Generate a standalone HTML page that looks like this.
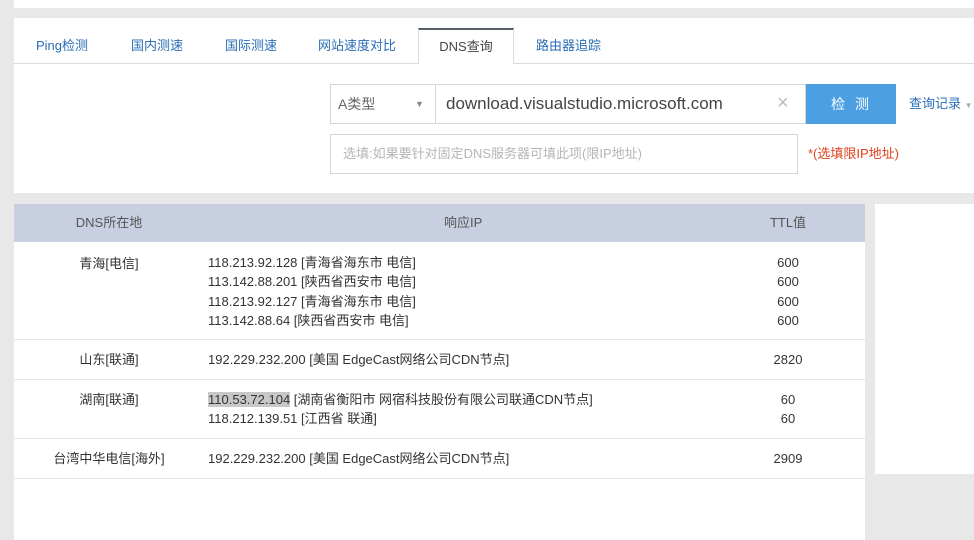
<!DOCTYPE html>
<html><head><meta charset="utf-8"><style>
*{margin:0;padding:0;box-sizing:border-box}
body{width:974px;height:540px;background:#e8e8e8;position:relative;overflow:hidden;font-family:"Liberation Sans","Noto Sans CJK SC",sans-serif;font-size:13px;color:#333}
.a{position:absolute}
.tab{position:absolute;top:28px;height:36px;line-height:36px;font-size:13px;color:#2a6db5}
td{padding:0}
.row{position:absolute;left:14px;width:851px;border-bottom:1px solid #e6e6e6}
.c1{position:absolute;left:0;width:190px;text-align:center}
.c2{position:absolute;left:194px}
.c3{position:absolute;left:740px;width:68px;text-align:center}
.ln{height:19.3px;line-height:19.3px}
</style></head><body>
<div class="a" style="left:14px;top:0;width:960px;height:8px;background:#fff"></div>
<div class="a" style="left:14px;top:18px;width:960px;height:175px;background:#fff"></div>
<div class="a" style="left:14px;top:63px;width:960px;height:1px;background:#ddd"></div>
<div class="tab" style="left:36px">Ping检测</div>
<div class="tab" style="left:131px">国内测速</div>
<div class="tab" style="left:225px">国际测速</div>
<div class="tab" style="left:318px">网站速度对比</div>
<div class="a" style="left:418px;top:28px;width:96px;height:36px;background:#fff;border:1px solid #ddd;border-top:2px solid #555d66;border-bottom:none;text-align:center;line-height:34px;color:#444">DNS查询</div>
<div class="tab" style="left:536px">路由器追踪</div>
<div class="a" style="left:330px;top:84px;width:476px;height:40px;border:1px solid #d6d6d6;background:#fff"></div>
<div class="a" style="left:435px;top:84px;width:1px;height:40px;background:#d6d6d6"></div>
<div class="a" style="left:338px;top:84px;line-height:40px;font-size:14px;color:#666">A类型</div>
<div class="a" style="left:415px;top:84px;line-height:40px;font-size:9px;color:#888">▼</div>
<div class="a" style="left:446px;top:84px;line-height:40px;font-size:17px;color:#444">download.visualstudio.microsoft.com</div>
<div class="a" style="left:777px;top:84px;line-height:38px;font-size:20px;color:#bbb">×</div>
<div class="a" style="left:806px;top:84px;width:90px;height:40px;background:#4c9fe0;color:#fff;text-align:center;line-height:40px;font-size:14px;letter-spacing:10px;padding-left:8px">检测</div>
<div class="a" style="left:909px;top:84px;line-height:40px;font-size:13px;color:#2a6db5">查询记录 <span style="font-size:8px;color:#aaa">▼</span></div>
<div class="a" style="left:330px;top:134px;width:468px;height:40px;border:1px solid #d6d6d6;padding-left:12px;line-height:38px;color:#b5b5b5;font-size:13px">选填:如果要针对固定DNS服务器可填此项(限IP地址)</div>
<div class="a" style="left:808px;top:134px;line-height:40px;color:#e0401c;font-size:13px">*(选填限IP地址)</div>
<div class="a" style="left:14px;top:204px;width:851px;height:336px;background:#fff"></div>
<div class="a" style="left:875px;top:204px;width:99px;height:270px;background:#fff"></div>
<div class="a" style="left:14px;top:204px;width:851px;height:38px;background:#c8cfe0;color:#555;line-height:38px">
<span class="c1" style="left:0">DNS所在地</span><span style="position:absolute;left:430px">响应IP</span><span class="c3">TTL值</span></div>
<div class="row" style="top:242px;height:98px;padding-top:11px">
<div class="c1" style="top:11px" class="ln">青海[电信]</div>
<div class="c2" style="top:11px"><div class="ln">118.213.92.128 [青海省海东市 电信]</div><div class="ln">113.142.88.201 [陕西省西安市 电信]</div><div class="ln">118.213.92.127 [青海省海东市 电信]</div><div class="ln">113.142.88.64 [陕西省西安市 电信]</div></div>
<div class="c3" style="top:11px"><div class="ln">600</div><div class="ln">600</div><div class="ln">600</div><div class="ln">600</div></div>
</div>
<div class="row" style="top:340px;height:40px">
<div class="c1 ln" style="top:10px">山东[联通]</div><div class="c2 ln" style="top:10px">192.229.232.200 [美国 EdgeCast网络公司CDN节点]</div><div class="c3 ln" style="top:10px">2820</div></div>
<div class="row" style="top:380px;height:59px">
<div class="c1 ln" style="top:10px">湖南[联通]</div>
<div class="c2" style="top:10px"><div class="ln"><span style="background:#c8c8c8">110.53.72.104</span> [湖南省衡阳市 网宿科技股份有限公司联通CDN节点]</div><div class="ln">118.212.139.51 [江西省 联通]</div></div>
<div class="c3" style="top:10px"><div class="ln">60</div><div class="ln">60</div></div></div>
<div class="row" style="top:439px;height:40px">
<div class="c1 ln" style="top:10px">台湾中华电信[海外]</div><div class="c2 ln" style="top:10px">192.229.232.200 [美国 EdgeCast网络公司CDN节点]</div><div class="c3 ln" style="top:10px">2909</div></div>
</body></html>
